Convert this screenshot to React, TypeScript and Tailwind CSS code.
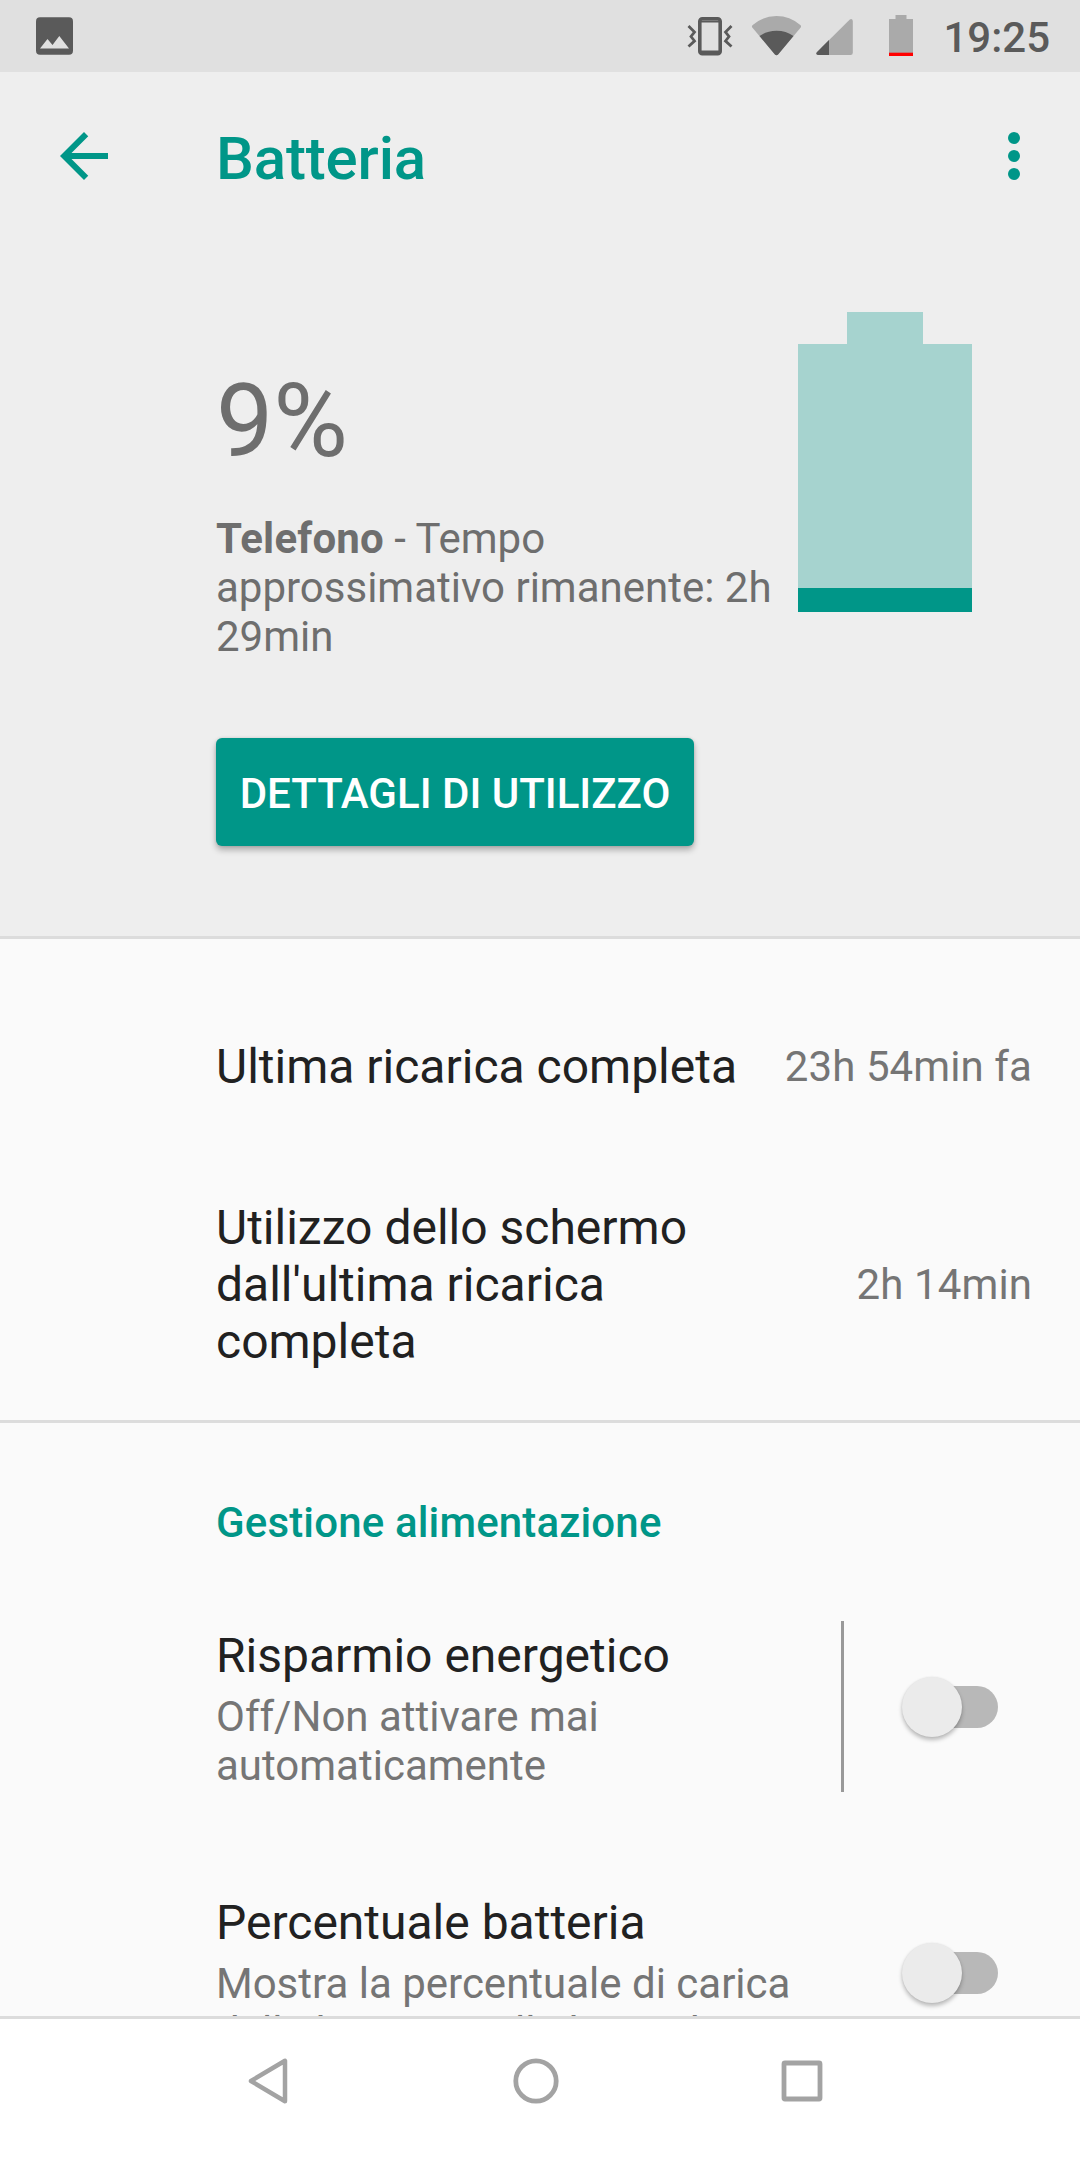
import { useState, type ReactNode } from 'react'

function StatusBar() {
  return (
    <div className="h-[72px] bg-[#e0e0e0] flex items-start pl-9 pr-[30px] text-[#5a5a5a] shrink-0">
      {/* Picture notification */}
      <svg className="w-[37px] h-[38px] mt-[17px]" viewBox="0 0 37 38">
        <rect x="0" y="0.3" width="37" height="37.5" rx="4" fill="currentColor" />
        <path d="M4 31.5L11.5 22l5 6L23.3 19 33 31.5z" fill="#e0e0e0" />
      </svg>

      <div className="ml-auto flex items-start">
        {/* Vibrate */}
        <svg className="w-[46px] h-[72px]" viewBox="687 0 46 72" fill="none" stroke="currentColor">
          <rect x="699.8" y="18.8" width="20.4" height="35" rx="2.5" strokeWidth="3.6" />
          <path d="M700 21.5h20M700 51.5h20" strokeWidth="2" />
          <path d="M688.5 26l6 6-3.5 4.5 3.5 4.5-6 5.5M731.5 26l-6 6 3.5 4.5-3.5 4.5 6 5.5" strokeWidth="2.8" />
        </svg>

        {/* Wifi */}
        <svg className="w-[50px] h-[72px] ml-[18px]" viewBox="751 0 50 72">
          <path d="M776.5 55.2q-1 0-1.8-1L752.3 27.5q-1-1.4.4-2.5Q763 16 776.5 16T800.3 25q1.4 1.1.4 2.5L778.3 54.2q-.8 1-1.8 1z" fill="#aaaaaa" />
          <path d="M776.5 55.2q-1 0-1.8-1L759.5 36q7.5-5.3 17-5.3t17 5.3L778.3 54.2q-.8 1-1.8 1z" fill="currentColor" />
        </svg>

        {/* Mobile signal */}
        <svg className="w-[37px] h-[72px] ml-[15px]" viewBox="816 0 37 72">
          <path d="M852.8 21v31.8q0 2.2-2.2 2.2H818q-2.5-.5-1.2-2.8L849.8 19.5q2.5-1.3 3 1.5z" fill="#aaaaaa" />
          <path d="M829 40v15H818q-2.5-.5-1.2-2.8z" fill="currentColor" />
        </svg>

        {/* Battery */}
        <svg className="w-[24px] h-[72px] ml-[36px]" viewBox="889 0 24 72">
          <path d="M895.5 15h11v4h6.5v34h-24V19h6.5z" fill="#aaaaaa" />
          <rect x="889" y="52.7" width="24" height="3.3" fill="#ff0000" />
        </svg>

        <span className="ml-[30px] mt-[13px] text-[42px] leading-[49px] font-medium">19:25</span>
      </div>
    </div>
  )
}

function AppBar({ title }: { title: string }) {
  return (
    <header className="h-[168px] flex items-center pl-12 pr-[30px] text-[#009688]">
      <button aria-label="Indietro">
        <svg className="w-[72px] h-[72px]" viewBox="0 0 24 24" fill="currentColor">
          <path d="M20 11H7.83l5.59-5.59L12 4l-8 8 8 8 1.41-1.41L7.83 13H20v-2z" />
        </svg>
      </button>
      <h1 className="ml-24 mt-1.5 text-[60px] leading-[70px] tracking-[-0.15px] font-medium">{title}</h1>
      <button className="ml-auto" aria-label="Altre opzioni">
        <svg className="w-[72px] h-[72px]" viewBox="0 0 24 24" fill="currentColor">
          <circle cx="12" cy="6" r="2" />
          <circle cx="12" cy="12" r="2" />
          <circle cx="12" cy="18" r="2" />
        </svg>
      </button>
    </header>
  )
}

function BatteryMeter({ level }: { level: number }) {
  // the charge is drawn in whole 3px steps
  const fill = Math.round((level * 268) / 100 / 3) * 3
  return (
    <div className="w-[174px] h-[300px] flex flex-col items-center">
      <div className="w-[76px] h-8 bg-[#a6d3cf]" />
      <div className="w-full flex-1 bg-[#a6d3cf] flex flex-col justify-end">
        <div className="bg-[#009688]" style={{ height: fill }} />
      </div>
    </div>
  )
}

function Switch({ label }: { label: string }) {
  const [on, setOn] = useState(false)
  return (
    <button
      role="switch"
      aria-checked={on}
      aria-label={label}
      onClick={() => setOn(!on)}
      className="relative w-24 h-[60px] shrink-0 flex items-center justify-end"
    >
      <span className={`w-[84px] h-[42px] rounded-full ${on ? 'bg-[#80cbc4]' : 'bg-[#b8b8b8]'}`} />
      <span
        className={`absolute top-0 w-[60px] h-[60px] rounded-full shadow-[0_3px_4px_rgba(0,0,0,0.26),0_0_2px_rgba(0,0,0,0.08)] ${
          on ? 'right-0 bg-[#009688]' : 'left-0 bg-[#ebebeb]'
        }`}
      />
    </button>
  )
}

function InfoRow({ title, value }: { title: string; value: string }) {
  return (
    <div className="flex items-center justify-between gap-10">
      <p className="max-w-[580px] text-[48px] leading-[57px] text-[#212121]">{title}</p>
      <p className="text-[42px] leading-[49px] tracking-[0.1px] text-[#757575] whitespace-nowrap">{value}</p>
    </div>
  )
}

function PreferenceText({ title, children }: { title: string; children: ReactNode }) {
  return (
    <div>
      <p className="text-[48px] leading-[57px] text-[#212121]">{title}</p>
      <p className="mt-2 text-[42px] leading-[49px] text-[#757575]">{children}</p>
    </div>
  )
}

function NavBar() {
  return (
    <nav className="h-36 shrink-0 bg-white border-t-[3px] border-[#dcdcdc] flex items-center justify-between pl-[237px] pr-[248px] pb-[18px] text-[#a3a3a3]">
      <svg className="w-[60px] h-[60px]" viewBox="0 0 60 60" fill="none" stroke="currentColor" strokeWidth="4.5" strokeLinejoin="round">
        <path d="M14 30L48 9.8V50.2z" />
      </svg>
      <svg className="w-[60px] h-[60px] ml-[3px]" viewBox="0 0 60 60" fill="none" stroke="currentColor" strokeWidth="4.8">
        <circle cx="30" cy="30" r="20.2" />
      </svg>
      <svg className="w-[60px] h-[60px]" viewBox="0 0 60 60" fill="none" stroke="currentColor" strokeWidth="4.8">
        <rect x="12" y="12" width="36" height="36" rx="1" />
      </svg>
    </nav>
  )
}

export default function App() {
  return (
    <div className="w-[1080px] h-[2160px] flex flex-col overflow-hidden bg-[#fafafa] font-[Roboto,sans-serif]">
      <StatusBar />

      <main className="flex-1 min-h-0 overflow-hidden">
        <section className="h-[867px] bg-[#eeeeee] border-b-[3px] border-[#dcdcdc]">
          <AppBar title="Batteria" />
          <div className="flex justify-between pl-[216px] pr-[108px] pt-[72px] text-[#6e6e6e]">
            <div className="w-[570px] pt-[49px]">
              <p className="text-[102px] leading-[120px]">9%</p>
              <p className="mt-[33px] text-[42px] leading-[49px]">
                <b className="tracking-[0.15px]">Telefono</b> - Tempo approssimativo rimanente: 2h 29min
              </p>
              <button className="mt-[77px] w-[478px] h-[108px] rounded-[6px] bg-[#009688] pt-[3px] text-white text-[42px] leading-[49px] font-medium whitespace-nowrap shadow-[0_4px_6px_rgba(0,0,0,0.28),0_0_3px_rgba(0,0,0,0.12)]">
                DETTAGLI DI UTILIZZO
              </button>
            </div>
            <BatteryMeter level={9} />
          </div>
        </section>

        <section className="h-[484px] pl-[216px] pr-12 pt-[99px] flex flex-col gap-[104px] border-b-[3px] border-[#dcdcdc]">
          <InfoRow title="Ultima ricarica completa" value="23h 54min fa" />
          <InfoRow title="Utilizzo dello schermo dall'ultima ricarica completa" value="2h 14min" />
        </section>

        <section className="pl-[216px] pr-[82px] pt-[75px]">
          <h2 className="text-[42px] leading-[49px] tracking-[0.15px] font-medium text-[#009688]">
            Gestione alimentazione
          </h2>

          <div className="mt-[74px] h-[171px] flex justify-between">
            <div className="w-[570px] pt-1.5">
              <PreferenceText title="Risparmio energetico">Off/Non attivare mai automaticamente</PreferenceText>
            </div>
            <div className="flex items-center border-l-[3px] border-[#999999] pl-[58px]">
              <Switch label="Risparmio energetico" />
            </div>
          </div>

          <div className="mt-[102px] flex items-start justify-between">
            <div className="w-[640px]">
              <PreferenceText title="Percentuale batteria">
                Mostra la percentuale di carica della batteria nella barra di stato
              </PreferenceText>
            </div>
            <div className="pt-[49px]">
              <Switch label="Percentuale batteria" />
            </div>
          </div>
        </section>
      </main>

      <NavBar />
    </div>
  )
}
